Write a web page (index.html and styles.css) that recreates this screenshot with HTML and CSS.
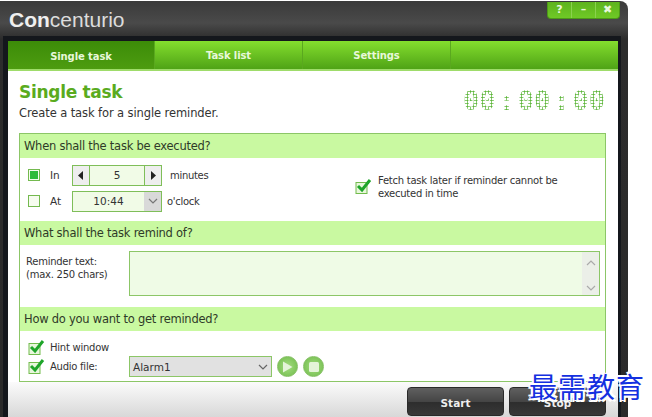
FILE: index.html
```html
<!DOCTYPE html>
<html lang="en">
<head>
    <meta charset="UTF-8">
    <title>Concenturio</title>
    <link rel="stylesheet" href="styles.css">
</head>
<body>
    <div class="window">
        <div class="titlebar">
            <div class="app-name"><b>Con</b>centurio</div>
            <div class="win-buttons">
                <span class="win-btn">?</span>
                <span class="win-btn">&ndash;</span>
                <span class="win-btn">&#10006;</span>
            </div>
        </div>
        <div class="frame">
            <div class="tabs">
                <div class="tab active">Single task</div>
                <div class="tab">Task list</div>
                <div class="tab">Settings</div>
                <div class="tab filler"></div>
            </div>
            <div class="content">
                <div class="page-head">
                    <div>
                        <h1>Single task</h1>
                        <p class="subtitle">Create a task for a single reminder.</p>
                    </div>
                    <div class="clock">
                        <span>00</span><span>:</span><span>00</span><span>:</span><span>00</span>
                    </div>
                </div>

                <div class="panel">
                    <div class="section-head">When shall the task be executed?</div>
                    <div class="section-body when">
                        <div class="when-left">
                            <div class="when-row">
                                <span class="box"><span class="box-fill"></span></span>
                                <span class="when-label">In</span>
                                <div class="field">
                                    <span class="arrow"><svg width="6" height="9" viewBox="0 0 6 9"><path d="M5 0V9L0 4.500Z" fill="#222"/></svg></span>
                                    <span class="field-value">5</span>
                                    <span class="arrow right"><svg width="6" height="9" viewBox="0 0 6 9"><path d="M1 0V9L6 4.500Z" fill="#222"/></svg></span>
                                </div>
                                <span class="unit">minutes</span>
                            </div>
                            <div class="when-row">
                                <span class="box"></span>
                                <span class="when-label">At</span>
                                <div class="field">
                                    <span class="field-value">10:44</span>
                                    <span class="drop"><svg width="10" height="6" viewBox="0 0 10 6"><path d="M1 1L5 5L9 1" fill="none" stroke="#777" stroke-width="1.200"/></svg></span>
                                </div>
                                <span class="unit clock-unit">o'clock</span>
                            </div>
                        </div>
                        <div class="fetch">
                            <svg class="check" width="17" height="15" viewBox="0 0 17 15"><rect x="1" y="3.500" width="11" height="11" fill="#e8f7dc" stroke="#72bb4c"/><path d="M3 7L7 11L15 1" fill="none" stroke="#1fa52a" stroke-width="3"/></svg>
                            <span>Fetch task later if reminder cannot be<br>executed in time</span>
                        </div>
                    </div>

                    <div class="section-head">What shall the task remind of?</div>
                    <div class="section-body remind">
                        <div class="remind-label">Reminder text:<br>(max. 250 chars)</div>
                        <div class="textbox">
                            <div class="scroll">
                                <svg width="10" height="6" viewBox="0 0 10 6"><path d="M1 5L5 1L9 5" fill="none" stroke="#aaa" stroke-width="1.200"/></svg>
                                <svg width="10" height="6" viewBox="0 0 10 6"><path d="M1 1L5 5L9 1" fill="none" stroke="#aaa" stroke-width="1.200"/></svg>
                            </div>
                        </div>
                    </div>

                    <div class="section-head">How do you want to get reminded?</div>
                    <div class="section-body how">
                        <div class="how-left">
                            <div class="how-row">
                                <svg class="check" width="17" height="15" viewBox="0 0 17 15"><rect x="1" y="3.500" width="11" height="11" fill="#e8f7dc" stroke="#72bb4c"/><path d="M3 7L7 11L15 1" fill="none" stroke="#1fa52a" stroke-width="3"/></svg>
                                <span>Hint window</span>
                            </div>
                            <div class="how-row">
                                <svg class="check" width="17" height="15" viewBox="0 0 17 15"><rect x="1" y="3.500" width="11" height="11" fill="#e8f7dc" stroke="#72bb4c"/><path d="M3 7L7 11L15 1" fill="none" stroke="#1fa52a" stroke-width="3"/></svg>
                                <span>Audio file:</span>
                            </div>
                        </div>
                        <div class="audio">
                            <div class="audio-select">
                                <span>Alarm1</span>
                                <svg width="10" height="6" viewBox="0 0 10 6"><path d="M1 1L5 5L9 1" fill="none" stroke="#666" stroke-width="1.200"/></svg>
                            </div>
                            <span class="round-btn"><svg width="11" height="12" viewBox="0 0 11 12"><path d="M1 0.500L10.500 6L1 11.500Z" fill="#e4f4d8"/></svg></span>
                            <span class="round-btn"><svg width="10" height="10" viewBox="0 0 10 10"><rect width="10" height="10" rx="1.500" fill="#e4f4d8"/></svg></span>
                        </div>
                    </div>
                </div>
            </div>
            <div class="footer">
                <button class="action">Start</button>
                <button class="action">Stop</button>
            </div>
        </div>
    </div>
    <div class="watermark">最需教育</div>
</body>
</html>
```

FILE: styles.css
```css
html, body {
    margin: 0;
    height: 417px;
    overflow: hidden;
    background: #fff;
}
body {
    position: relative;
    font-family: "DejaVu Sans", sans-serif;
    font-size: 11px;
    color: #333;
}
.window {
    box-sizing: border-box;
    width: 628px;
    height: 417px;
    margin-top: 1px;
    padding: 0 7px 0 3px;
    background: linear-gradient(to bottom, #3a3a3a, #4a4a4a 22px, #2c2c2c 38px, #2a2a2a);
    border-top-right-radius: 8px;
    overflow: hidden;
}
.titlebar {
    display: flex;
    justify-content: space-between;
    height: 35px;
}
.app-name {
    margin: 7px 0 0 6px;
    font-family: "Liberation Sans", Arial, sans-serif;
    font-size: 21px;
    color: #dcdcdc;
}
.app-name b {
    color: #efefef;
}
.win-buttons {
    display: flex;
    height: 16px;
    margin: 1px 1px 0 0;
    background: linear-gradient(to bottom, #5eb31d, #6fc926);
    border: 1px solid #4d9a18;
    border-top: 0;
    border-radius: 0 0 4px 4px;
}
.win-btn {
    width: 23px;
    text-align: center;
    color: #e9f7dc;
    font: bold 11px/15px "DejaVu Sans", sans-serif;
    border-left: 1px solid #8ad24e;
}
.win-btn:first-child {
    border-left: 0;
}
.frame {
    box-sizing: border-box;
    height: 400px;
    border: solid #14171c;
    border-width: 5px 3px 0 5px;
}
.tabs {
    box-sizing: border-box;
    display: flex;
    height: 30px;
    border-bottom: 2px solid #9fdc6a;
}
.tab {
    box-sizing: border-box;
    width: 148px;
    padding-top: 9px;
    text-align: center;
    font-weight: bold;
    font-size: 10px;
    letter-spacing: -0.100px;
    color: #e8f8da;
    background: linear-gradient(to bottom, #84de2e, #4fa316);
    border-right: 1px solid #5aa81f;
}
.tab.active {
    width: 147px;
    padding-top: 10px;
    background: linear-gradient(to bottom, #3c8c08, #4d9c10);
}
.tab.filler {
    flex: 1;
    border-right: 0;
}
.content {
    box-sizing: border-box;
    height: 311px;
    padding: 0 12px 0 11px;
    background: #fff;
}
.page-head {
    display: flex;
    justify-content: space-between;
    height: 62px;
}
h1 {
    margin: 10px 0 0;
    font-size: 17px;
    letter-spacing: -0.300px;
    line-height: 23px;
    color: #5aab1e;
}
.subtitle {
    margin: 2px 0 0;
    font-size: 11.500px;
    line-height: 15px;
    letter-spacing: -0.100px;
}
.clock {
    display: flex;
    gap: 3px;
    margin: 16px 1px 0 0;
    font-family: "DejaVu Sans Mono", monospace;
    font-size: 27px;
    font-weight: bold;
    line-height: 28px;
    height: 28px;
    color: transparent;
    background: radial-gradient(circle, #5db53a 0.900px, transparent 1.300px) 0 0 / 3px 3px;
    -webkit-background-clip: text;
    background-clip: text;
}
.panel {
    box-sizing: border-box;
    height: 249px;
    border: 1px solid #8cc667;
}
.section-head {
    height: 24px;
    padding-left: 4px;
    font-size: 11.500px;
    letter-spacing: -0.250px;
    line-height: 24px;
    color: #2f3a28;
    background: #c9f9a1;
}
.section-body {
    box-sizing: border-box;
    height: 62px;
}
.when {
    display: flex;
    gap: 39px;
    height: 63px;
    padding: 6px 0 0 8px;
}
.when-left {
    width: 288px;
}
.when-row {
    display: flex;
    align-items: center;
    height: 22px;
    margin-bottom: 4px;
}
.box {
    box-sizing: border-box;
    display: flex;
    align-items: center;
    justify-content: center;
    width: 12px;
    height: 12px;
    border: 1px solid #74b94f;
    background: #f6fcef;
}
.box-fill {
    width: 8px;
    height: 8px;
    background: #2fbb3a;
}
.when-label {
    width: 32px;
    padding-left: 10px;
    box-sizing: border-box;
    font-size: 10.500px;
}
.field {
    box-sizing: border-box;
    display: flex;
    width: 90px;
    height: 21px;
    border: 1px solid #7fbe59;
    background: #f1fbe7;
    font-size: 10.500px;
}
.field-value {
    flex: 1;
    text-align: center;
    line-height: 19px;
}
.arrow {
    display: flex;
    align-items: center;
    justify-content: center;
    width: 16px;
    background: #eeeeee;
    border-right: 1px solid #7fbe59;
}
.arrow.right {
    border-right: 0;
    border-left: 1px solid #7fbe59;
}
.drop {
    display: flex;
    align-items: center;
    justify-content: center;
    width: 17px;
    background: #d9d9d9;
}
.unit {
    margin-left: 8px;
    font-size: 10px;
    letter-spacing: -0.300px;
}
.clock-unit {
    margin-left: 5px;
}
.fetch {
    display: flex;
    gap: 6px;
    padding-top: 10px;
    font-size: 10px;
    letter-spacing: -0.250px;
    line-height: 13px;
}
.fetch .check {
    margin-top: 5px;
}
.remind {
    display: flex;
    padding: 6px 0 0 6px;
}
.remind-label {
    width: 103px;
    padding-top: 4px;
    font-size: 10px;
    letter-spacing: -0.250px;
    line-height: 13px;
}
.textbox {
    box-sizing: border-box;
    display: flex;
    justify-content: flex-end;
    width: 471px;
    height: 45px;
    border: 1px solid #8cc667;
    background: #effbe6;
}
.scroll {
    display: flex;
    flex-direction: column;
    justify-content: space-between;
    align-items: center;
    box-sizing: border-box;
    width: 17px;
    padding: 8px 0 4px;
    background: #ebefe8;
}
.how {
    display: flex;
    height: 50px;
    padding: 7px 0 0 8px;
}
.how-left {
    width: 101px;
}
.how-row {
    display: flex;
    align-items: center;
    gap: 5px;
    height: 19px;
    font-size: 10px;
    letter-spacing: -0.250px;
}
.audio {
    display: flex;
    align-items: center;
    gap: 5px;
    height: 21px;
    margin-top: 18px;
}
.audio-select {
    box-sizing: border-box;
    display: flex;
    align-items: center;
    justify-content: space-between;
    width: 143px;
    height: 21px;
    padding: 0 3px;
    border: 1px solid #8cc667;
    background: #e1e1e1;
    font-size: 10.500px;
}
.round-btn {
    box-sizing: border-box;
    display: flex;
    align-items: center;
    justify-content: center;
    width: 21px;
    height: 21px;
    border-radius: 50%;
    border: 1px solid #84bf63;
    background: radial-gradient(circle, #a4dc80, #6fbb4a);
}
.footer {
    box-sizing: border-box;
    display: flex;
    justify-content: flex-end;
    gap: 5px;
    height: 35px;
    padding: 5px 12px 0 0;
    background: linear-gradient(to bottom, #fbfbfb, #d8d8d8);
}
.action {
    width: 97px;
    height: 29px;
    padding-top: 4px;
    border: 1px solid #2a2a2a;
    border-radius: 4px;
    background: linear-gradient(to bottom, #606060, #454545 50%, #2d2d2d 52%, #383838);
    color: #eee;
    font: bold 10.500px "DejaVu Sans", sans-serif;
}
.watermark {
    position: absolute;
    left: 529px;
    top: 367px;
    font-family: "Noto Sans CJK SC", sans-serif;
    font-size: 28px;
    line-height: 38px;
    letter-spacing: 1px;
    color: #1430e0;
    text-shadow: 1px 0 #fff, -1px 0 #fff, 0 1px #fff, 0 -1px #fff, 2px 2px #fff, -2px -2px #fff, 2px -2px #fff, -2px 2px #fff;
}
```
